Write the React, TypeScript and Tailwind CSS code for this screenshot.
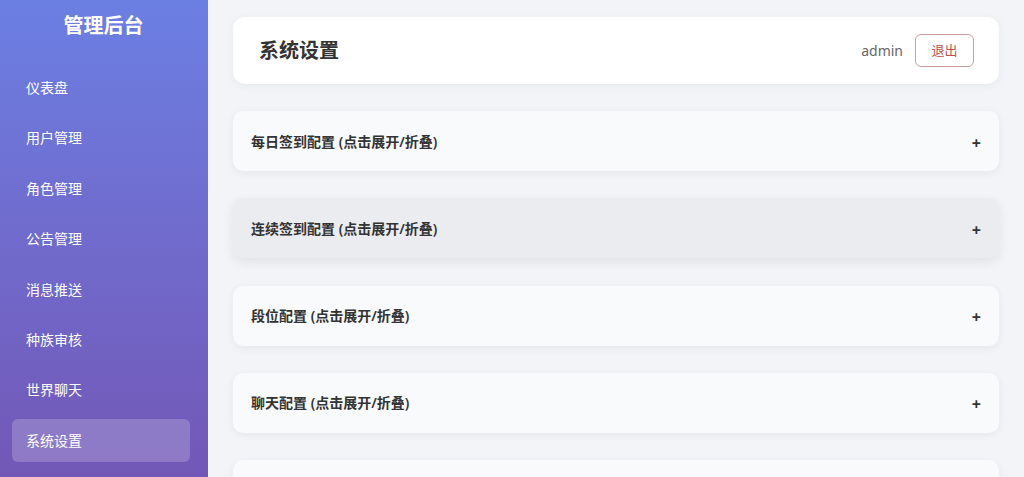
import React from "react";

const navItems = ["仪表盘", "用户管理", "角色管理", "公告管理", "消息推送", "种族审核", "世界聊天", "系统设置"];
const sections = ["每日签到配置", "连续签到配置", "段位配置", "聊天配置"];

export default function App() {
  return (
    <div
      className="flex h-[477px] w-[1024px] overflow-hidden bg-[#f3f4f8]"
      style={{ fontFamily: '"Noto Sans", "Noto Sans CJK SC", sans-serif' }}
    >
      <aside className="flex h-full w-[208px] shrink-0 flex-col bg-gradient-to-b from-[#6b7fe3] to-[#7257b6] pl-[12px] pr-[18px]">
        <div className="flex h-[50px] items-center justify-center pl-[5px] pt-[1px] text-[20px] font-bold text-white">
          管理后台
        </div>
        <nav className="mt-[16px] flex flex-col gap-[7.4px]">
          {navItems.map((item) => (
            <div
              key={item}
              className={`flex h-[43px] items-center rounded-[6px] px-[14px] text-[14px] text-white ${
                item === "系统设置" ? "bg-white/20" : ""
              }`}
            >
              {item}
            </div>
          ))}
        </nav>
      </aside>
      <main className="flex min-w-0 flex-1 flex-col px-[25px] pt-[17px]">
        <header className="flex h-[67px] shrink-0 items-center justify-between rounded-[12px] bg-white pl-[26px] pr-[25px] shadow-[0_2px_10px_rgba(0,0,0,0.05)]">
          <h1 className="text-[20px] font-bold text-[#333333]">系统设置</h1>
          <div className="flex items-center gap-[12px]">
            <span className="text-[14px] text-[#666666]">admin</span>
            <button className="flex h-[33px] w-[59px] items-center justify-center rounded-[6px] border border-[#c9a0a0] bg-white text-[13px] text-[#c0504d]">
              退出
            </button>
          </div>
        </header>
        <div className="mt-[27px] flex flex-col gap-[27.3px]">
          {sections.map((s, i) => (
            <div
              key={s}
              className={`flex h-[60px] shrink-0 items-center justify-between rounded-[10px] px-[18px] ${
                i === 1
                  ? "bg-[#ebecf0] shadow-[0_4px_12px_rgba(0,0,0,0.08)]"
                  : "bg-[#f9fafc] shadow-[0_2px_8px_rgba(0,0,0,0.06)]"
              }`}
            >
              <span className="text-[14px] font-semibold text-[#333333]">{s} (点击展开/折叠)</span>
              <span className="mt-[3px] text-[16px] font-bold text-[#333333]">+</span>
            </div>
          ))}
          <div className="h-[60px] shrink-0 rounded-[10px] bg-[#f9fafc] shadow-[0_2px_8px_rgba(0,0,0,0.06)]" />
        </div>
      </main>
    </div>
  );
}
